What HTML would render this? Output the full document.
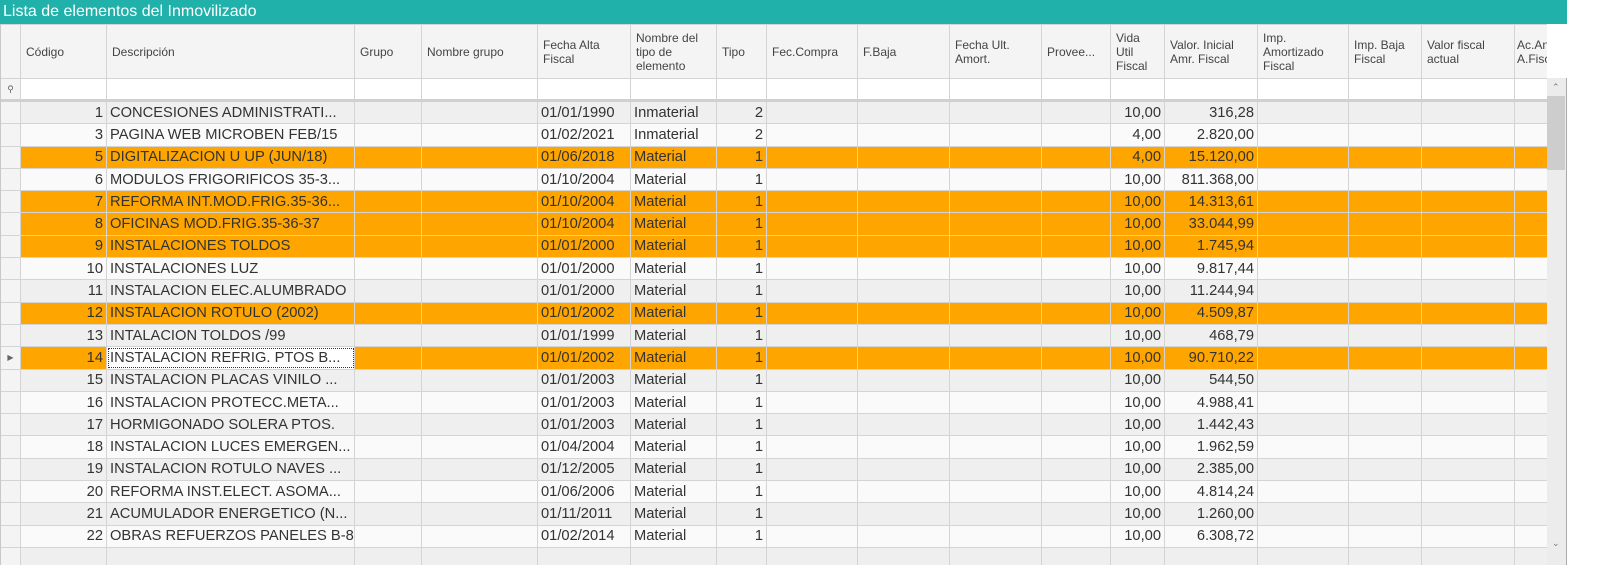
<!DOCTYPE html>
<html><head><meta charset="utf-8"><style>
body{margin:0;background:#fff;width:1617px;height:565px;overflow:hidden;font-family:"Liberation Sans",sans-serif;}
#t{position:absolute;left:0;top:0;width:1567px;height:24px;background:#20b2aa;color:#fff;font-size:16px;line-height:24px;}
#t span{padding-left:3px}
#g{position:absolute;left:0;top:24px;width:1547px;height:541px;overflow:hidden;border-left:1px solid #c8c8c8;box-sizing:border-box}
table{border-collapse:collapse;table-layout:fixed;width:1547px;margin-left:-1px}
td{border:1px solid #d4d4d4;padding:0 3px;overflow:hidden;white-space:nowrap;color:#333;font-size:14.7px;font-family:"Liberation Sans",sans-serif}
tr.h td{background:#f4f4f4;font-size:12px;color:#444;height:53px;vertical-align:middle;white-space:normal;line-height:14px;padding:0 5px}
tr.f td{background:#fff;height:20px;border-bottom:3px solid #d0d0d0}
tr.d td{height:21.3px;padding:0 3px}
tr.d td.r{text-align:right}
tr.d td:first-child,tr.h td:first-child,tr.f td:first-child{background:#f4f4f4}
tr.a td{background:#efefef}
tr.b td{background:#fafafa}
tr.o td{background:#ffa500}
td.foc{background:#fff !important;outline:1px dotted #333;outline-offset:-2px}
#sb{position:absolute;left:1547px;top:78px;width:19px;height:487px;background:#ececec;border-right:1px solid #aaa}
#th{position:absolute;left:0;top:18px;width:18px;height:74px;background:#cdcdcd}
</style></head><body>
<div id="t"><span>Lista de elementos del Inmovilizado</span></div>
<div id="g"><table>
<colgroup><col style="width:20px"><col style="width:86px"><col style="width:248px"><col style="width:67px"><col style="width:116px"><col style="width:93px"><col style="width:86px"><col style="width:50px"><col style="width:91px"><col style="width:92px"><col style="width:92px"><col style="width:69px"><col style="width:54px"><col style="width:93px"><col style="width:91px"><col style="width:73px"><col style="width:93px"><col style="width:33px"></colgroup>
<tr class="h"><td></td><td>Código</td><td>Descripción</td><td>Grupo</td><td>Nombre grupo</td><td>Fecha Alta Fiscal</td><td>Nombre del tipo de elemento</td><td>Tipo</td><td>Fec.Compra</td><td>F.Baja</td><td>Fecha Ult. Amort.</td><td>Provee...</td><td>Vida Util Fiscal</td><td>Valor. Inicial Amr. Fiscal</td><td>Imp. Amortizado Fiscal</td><td>Imp. Baja Fiscal</td><td>Valor fiscal actual</td><td style="padding:0 2px">Ac.Anua A.Fiscal</td></tr>
<tr class="f"><td style="font-size:9px;color:#666;text-align:center">&#9906;</td><td></td><td></td><td></td><td></td><td></td><td></td><td></td><td></td><td></td><td></td><td></td><td></td><td></td><td></td><td></td><td></td><td></td></tr>
<tr class="d a"><td></td><td class="r">1</td><td>CONCESIONES ADMINISTRATI...</td><td></td><td></td><td>01/01/1990</td><td>Inmaterial</td><td class="r">2</td><td></td><td></td><td></td><td></td><td class="r">10,00</td><td class="r">316,28</td><td></td><td></td><td></td><td></td></tr>
<tr class="d b"><td></td><td class="r">3</td><td>PAGINA WEB MICROBEN FEB/15</td><td></td><td></td><td>01/02/2021</td><td>Inmaterial</td><td class="r">2</td><td></td><td></td><td></td><td></td><td class="r">4,00</td><td class="r">2.820,00</td><td></td><td></td><td></td><td></td></tr>
<tr class="d o"><td></td><td class="r">5</td><td>DIGITALIZACION U UP (JUN/18)</td><td></td><td></td><td>01/06/2018</td><td>Material</td><td class="r">1</td><td></td><td></td><td></td><td></td><td class="r">4,00</td><td class="r">15.120,00</td><td></td><td></td><td></td><td></td></tr>
<tr class="d b"><td></td><td class="r">6</td><td>MODULOS FRIGORIFICOS 35-3...</td><td></td><td></td><td>01/10/2004</td><td>Material</td><td class="r">1</td><td></td><td></td><td></td><td></td><td class="r">10,00</td><td class="r">811.368,00</td><td></td><td></td><td></td><td></td></tr>
<tr class="d o"><td></td><td class="r">7</td><td>REFORMA INT.MOD.FRIG.35-36...</td><td></td><td></td><td>01/10/2004</td><td>Material</td><td class="r">1</td><td></td><td></td><td></td><td></td><td class="r">10,00</td><td class="r">14.313,61</td><td></td><td></td><td></td><td></td></tr>
<tr class="d o"><td></td><td class="r">8</td><td>OFICINAS MOD.FRIG.35-36-37</td><td></td><td></td><td>01/10/2004</td><td>Material</td><td class="r">1</td><td></td><td></td><td></td><td></td><td class="r">10,00</td><td class="r">33.044,99</td><td></td><td></td><td></td><td></td></tr>
<tr class="d o"><td></td><td class="r">9</td><td>INSTALACIONES TOLDOS</td><td></td><td></td><td>01/01/2000</td><td>Material</td><td class="r">1</td><td></td><td></td><td></td><td></td><td class="r">10,00</td><td class="r">1.745,94</td><td></td><td></td><td></td><td></td></tr>
<tr class="d b"><td></td><td class="r">10</td><td>INSTALACIONES LUZ</td><td></td><td></td><td>01/01/2000</td><td>Material</td><td class="r">1</td><td></td><td></td><td></td><td></td><td class="r">10,00</td><td class="r">9.817,44</td><td></td><td></td><td></td><td></td></tr>
<tr class="d a"><td></td><td class="r">11</td><td>INSTALACION ELEC.ALUMBRADO</td><td></td><td></td><td>01/01/2000</td><td>Material</td><td class="r">1</td><td></td><td></td><td></td><td></td><td class="r">10,00</td><td class="r">11.244,94</td><td></td><td></td><td></td><td></td></tr>
<tr class="d o"><td></td><td class="r">12</td><td>INSTALACION ROTULO (2002)</td><td></td><td></td><td>01/01/2002</td><td>Material</td><td class="r">1</td><td></td><td></td><td></td><td></td><td class="r">10,00</td><td class="r">4.509,87</td><td></td><td></td><td></td><td></td></tr>
<tr class="d a"><td></td><td class="r">13</td><td>INTALACION TOLDOS /99</td><td></td><td></td><td>01/01/1999</td><td>Material</td><td class="r">1</td><td></td><td></td><td></td><td></td><td class="r">10,00</td><td class="r">468,79</td><td></td><td></td><td></td><td></td></tr>
<tr class="d o"><td style="font-size:8px;color:#666;text-align:center">&#9654;</td><td class="r">14</td><td class="foc">INSTALACION REFRIG. PTOS B...</td><td></td><td></td><td>01/01/2002</td><td>Material</td><td class="r">1</td><td></td><td></td><td></td><td></td><td class="r">10,00</td><td class="r">90.710,22</td><td></td><td></td><td></td><td></td></tr>
<tr class="d a"><td></td><td class="r">15</td><td>INSTALACION PLACAS VINILO ...</td><td></td><td></td><td>01/01/2003</td><td>Material</td><td class="r">1</td><td></td><td></td><td></td><td></td><td class="r">10,00</td><td class="r">544,50</td><td></td><td></td><td></td><td></td></tr>
<tr class="d b"><td></td><td class="r">16</td><td>INSTALACION PROTECC.META...</td><td></td><td></td><td>01/01/2003</td><td>Material</td><td class="r">1</td><td></td><td></td><td></td><td></td><td class="r">10,00</td><td class="r">4.988,41</td><td></td><td></td><td></td><td></td></tr>
<tr class="d a"><td></td><td class="r">17</td><td>HORMIGONADO SOLERA PTOS.</td><td></td><td></td><td>01/01/2003</td><td>Material</td><td class="r">1</td><td></td><td></td><td></td><td></td><td class="r">10,00</td><td class="r">1.442,43</td><td></td><td></td><td></td><td></td></tr>
<tr class="d b"><td></td><td class="r">18</td><td>INSTALACION LUCES EMERGEN...</td><td></td><td></td><td>01/04/2004</td><td>Material</td><td class="r">1</td><td></td><td></td><td></td><td></td><td class="r">10,00</td><td class="r">1.962,59</td><td></td><td></td><td></td><td></td></tr>
<tr class="d a"><td></td><td class="r">19</td><td>INSTALACION ROTULO NAVES ...</td><td></td><td></td><td>01/12/2005</td><td>Material</td><td class="r">1</td><td></td><td></td><td></td><td></td><td class="r">10,00</td><td class="r">2.385,00</td><td></td><td></td><td></td><td></td></tr>
<tr class="d b"><td></td><td class="r">20</td><td>REFORMA INST.ELECT. ASOMA...</td><td></td><td></td><td>01/06/2006</td><td>Material</td><td class="r">1</td><td></td><td></td><td></td><td></td><td class="r">10,00</td><td class="r">4.814,24</td><td></td><td></td><td></td><td></td></tr>
<tr class="d a"><td></td><td class="r">21</td><td>ACUMULADOR ENERGETICO (N...</td><td></td><td></td><td>01/11/2011</td><td>Material</td><td class="r">1</td><td></td><td></td><td></td><td></td><td class="r">10,00</td><td class="r">1.260,00</td><td></td><td></td><td></td><td></td></tr>
<tr class="d b"><td></td><td class="r">22</td><td>OBRAS REFUERZOS PANELES B-8</td><td></td><td></td><td>01/02/2014</td><td>Material</td><td class="r">1</td><td></td><td></td><td></td><td></td><td class="r">10,00</td><td class="r">6.308,72</td><td></td><td></td><td></td><td></td></tr>
<tr class="d a"><td></td><td></td><td></td><td></td><td></td><td></td><td></td><td></td><td></td><td></td><td></td><td></td><td></td><td></td><td></td><td></td><td></td><td></td></tr>
</table></div>
<div id="sb"><div style="position:absolute;left:5px;top:4px;font-size:9px;color:#777">&#8963;</div><div id="th"></div><div style="position:absolute;left:5px;top:460px;font-size:9px;color:#777">&#8964;</div></div>
</body></html>
